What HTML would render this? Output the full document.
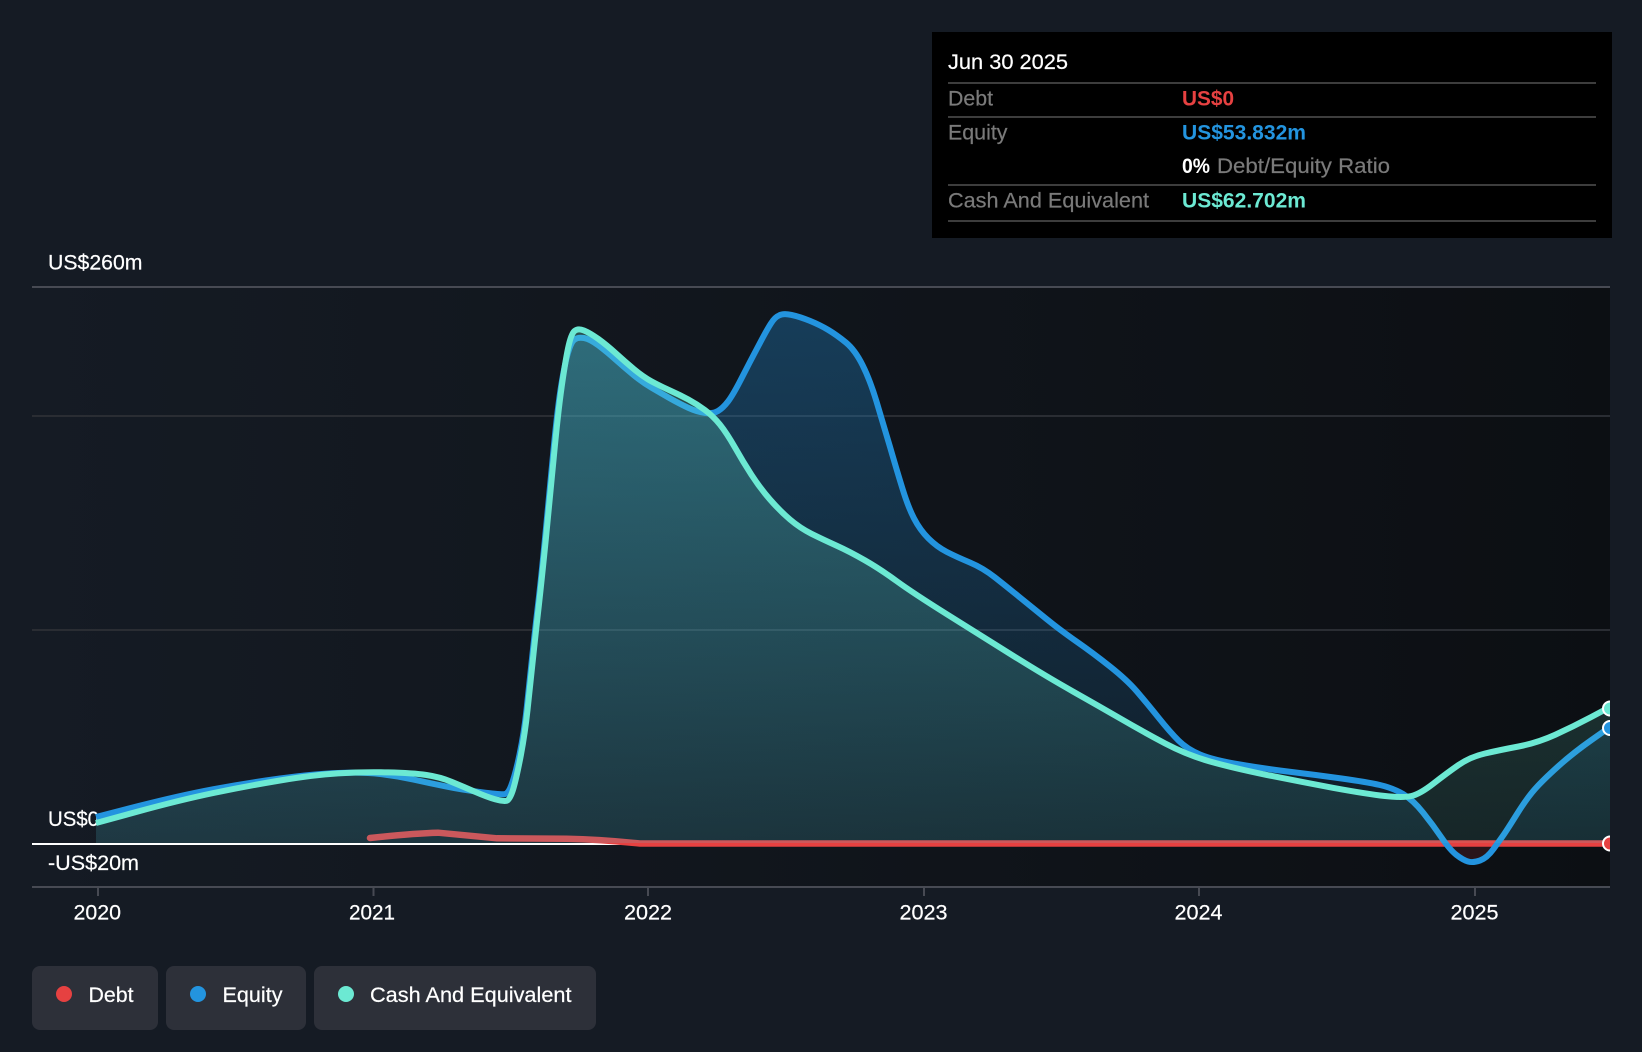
<!DOCTYPE html>
<html>
<head>
<meta charset="utf-8">
<style>
html,body{margin:0;padding:0;background:#151b24;width:1642px;height:1052px;overflow:hidden}
svg{display:block}
text{font-family:"Liberation Sans",sans-serif;font-size:21px;fill:#fff;stroke:#fff;stroke-width:.2px}
.g{fill:#7a7a7a;stroke:#7a7a7a}
</style>
</head>
<body>
<svg width="1642" height="1052" viewBox="0 0 1642 1052" xmlns="http://www.w3.org/2000/svg">
<defs>
<linearGradient id="bg" gradientUnits="userSpaceOnUse" x1="32" y1="0" x2="1610" y2="0">
<stop offset="0" stop-color="#151b24"/><stop offset="1" stop-color="#0c0f13"/>
</linearGradient>
<linearGradient id="blueF" gradientUnits="userSpaceOnUse" x1="0" y1="300" x2="0" y2="843">
<stop offset="0" stop-color="#2394df" stop-opacity=".32"/><stop offset="1" stop-color="#2394df" stop-opacity=".08"/>
</linearGradient>
<linearGradient id="tealF" gradientUnits="userSpaceOnUse" x1="0" y1="315" x2="0" y2="843">
<stop offset="0" stop-color="#6ce9d3" stop-opacity=".28"/><stop offset="1" stop-color="#6ce9d3" stop-opacity=".1"/>
</linearGradient>
<clipPath id="plot"><rect x="32" y="280" width="1578" height="610"/></clipPath>
</defs>
<rect width="1642" height="1052" fill="#151b24"/>
<rect x="32" y="287" width="1578" height="600" fill="url(#bg)"/>

<!-- grid -->
<rect x="32" y="286" width="1578" height="2" fill="#474a53"/>
<rect x="32" y="415" width="1578" height="2" fill="#2a2d33"/>
<rect x="32" y="629" width="1578" height="2" fill="#2a2d33"/>
<rect x="32" y="886" width="1578" height="2" fill="#474a53"/>
<g fill="#474a53">
<rect x="97" y="887" width="2" height="9"/><rect x="372.500" y="887" width="2" height="9"/><rect x="647" y="887" width="2" height="9"/><rect x="923" y="887" width="2" height="9"/><rect x="1198" y="887" width="2" height="9"/><rect x="1474" y="887" width="2" height="9"/>
</g>
<!-- axis labels -->
<text x="48" y="269.500" textLength="94.500" lengthAdjust="spacingAndGlyphs">US$260m</text>
<text x="48" y="826" textLength="51" lengthAdjust="spacingAndGlyphs">US$0</text>
<text x="48" y="870" textLength="91" lengthAdjust="spacingAndGlyphs">-US$20m</text>
<text x="73.500" y="919.500" textLength="47.500" lengthAdjust="spacingAndGlyphs">2020</text>
<text x="349" y="919.500" textLength="46" lengthAdjust="spacingAndGlyphs">2021</text>
<text x="624" y="919.500" textLength="48" lengthAdjust="spacingAndGlyphs">2022</text>
<text x="899.500" y="919.500" textLength="48" lengthAdjust="spacingAndGlyphs">2023</text>
<text x="1174.500" y="919.500" textLength="48" lengthAdjust="spacingAndGlyphs">2024</text>
<text x="1450.500" y="919.500" textLength="48" lengthAdjust="spacingAndGlyphs">2025</text>

<!-- baseline -->
<rect x="32" y="843" width="1578" height="2" fill="#fff"/>

<g clip-path="url(#plot)">
<!-- debt -->
<path d="M370 838 Q413 833.3 438 832.700 Q463 835 497 838.300 L566.700 838.700 Q600 839.300 640 843.500 L1610 843.500" fill="none" stroke="#e64141" stroke-width="6.500" stroke-linecap="round" stroke-linejoin="round"/>
<path d="M1445 843.500 Q1450 850 1456.500 855 Q1463 860 1468 861.500 Q1473 863 1480 860.500 Q1487 858 1493.500 849 L1497 843.500 Z" fill="#e64141" fill-opacity=".13"/>

<!-- equity fill -->
<path fill="url(#blueF)" d="M96 843 L96 817 L138 806.200 Q180 795.500 213.500 789.200 Q247 783 280 778.500 Q313 774 338 773 Q363 772 380 774 Q397 776 413.500 779.600 Q430 783.300 446.500 786.600 Q463 790 481.500 792.200 Q500 794.500 504 794.200 Q508 794 511 786 Q515 776 519.500 754.500 Q524 733 526.500 710 Q529 687 532 658.500 Q535 630 538 605 Q541 580 545 538.500 Q549 497 553 455 Q557 413 560.500 390 Q564 367 567.500 354.500 Q571 342 574.500 339.500 Q578 337 584 338 Q590 339 598.400 345.400 Q606.700 351.700 615.900 359.900 Q625 368 634 375.400 Q643 382.700 651.500 387.700 Q660 392.700 670 398.400 Q680 404 688.400 407.900 Q696.700 411.700 704.900 412.900 Q713 414 718 411 Q723 408 728 401.500 Q733 395 741.500 378.400 Q750 361.700 758.400 345.900 Q766.700 330 770.900 323.500 Q775 317 779 315.500 Q783 313 791.500 314.900 Q800 316.700 810 320.900 Q820 325 828.400 330 Q836.700 335 845.900 342.500 Q855 350 862.500 365 Q870 380 876.500 401.500 Q883 423 889.900 446.500 Q896.700 470 902.400 488.400 Q908 506.700 914 518.400 Q920 530 928.400 538.400 Q936.700 546.700 946.700 551.900 Q956.700 557 969.900 562.500 Q983 568 994.900 577.400 Q1006.700 586.700 1019.900 597.400 Q1033 608 1046.500 619 Q1060 630 1076.500 641.500 Q1093 653 1110 666.500 Q1127 680 1136.900 691.500 Q1146.700 703 1158.400 717.500 Q1170 732 1178.500 740.500 Q1187 749 1200 754.500 Q1213 760 1239.900 764.500 Q1266.700 769 1291.700 772 Q1316.700 775 1341.700 778.500 Q1366.700 782 1379.900 785 Q1393 788 1403 794 Q1413 800 1423 812.500 Q1429 820 1443 843 L1497 843 Q1500 840 1503.500 835 Q1507 830 1517 814 Q1527 798 1535 789 Q1543 780 1558 766.500 Q1573 753 1591.500 740 L1610 727 L1610 843 Z"/>
<!-- equity line -->
<path fill="none" stroke="#2394df" stroke-width="6" stroke-linejoin="round" d="M96 817 L138 806.200 Q180 795.500 213.500 789.200 Q247 783 280 778.500 Q313 774 338 773 Q363 772 380 774 Q397 776 413.500 779.600 Q430 783.300 446.500 786.600 Q463 790 481.500 792.200 Q500 794.500 504 794.200 Q508 794 511 786 Q515 776 519.500 754.500 Q524 733 526.500 710 Q529 687 532 658.500 Q535 630 538 605 Q541 580 545 538.500 Q549 497 553 455 Q557 413 560.500 390 Q564 367 567.500 354.500 Q571 342 574.500 339.500 Q578 337 584 338 Q590 339 598.400 345.400 Q606.700 351.700 615.900 359.900 Q625 368 634 375.400 Q643 382.700 651.500 387.700 Q660 392.700 670 398.400 Q680 404 688.400 407.900 Q696.700 411.700 704.900 412.900 Q713 414 718 411 Q723 408 728 401.500 Q733 395 741.500 378.400 Q750 361.700 758.400 345.900 Q766.700 330 770.900 323.500 Q775 317 779 315.500 Q783 313 791.500 314.900 Q800 316.700 810 320.900 Q820 325 828.400 330 Q836.700 335 845.900 342.500 Q855 350 862.500 365 Q870 380 876.500 401.500 Q883 423 889.900 446.500 Q896.700 470 902.400 488.400 Q908 506.700 914 518.400 Q920 530 928.400 538.400 Q936.700 546.700 946.700 551.900 Q956.700 557 969.900 562.500 Q983 568 994.900 577.400 Q1006.700 586.700 1019.900 597.400 Q1033 608 1046.500 619 Q1060 630 1076.500 641.500 Q1093 653 1110 666.500 Q1127 680 1136.900 691.500 Q1146.700 703 1158.400 717.500 Q1170 732 1178.500 740.500 Q1187 749 1200 754.500 Q1213 760 1239.900 764.500 Q1266.700 769 1291.700 772 Q1316.700 775 1341.700 778.500 Q1366.700 782 1379.900 785 Q1393 788 1403 794 Q1413 800 1423 812.500 Q1433 825 1441.500 837.500 Q1450 850 1456.500 855 Q1463 860 1468 861.500 Q1473 863 1480 860.500 Q1487 858 1493.500 849 Q1500 840 1503.500 835 Q1507 830 1517 814 Q1527 798 1535 789 Q1543 780 1558 766.500 Q1573 753 1591.500 740 L1610 727"/>
<!-- cash fill -->
<path fill="url(#tealF)" d="M96 843 L96 823 L138 811.500 Q180 800 213.500 793 Q247 786 280 780.500 Q313 775 338 773.400 Q363 771.700 388 772.400 Q413 773 426.500 775 Q440 777 451.500 781.800 Q463 786.500 475 791.800 Q487 797 495 799.300 Q503 801.500 506.500 800.800 Q510 800 513.400 788.500 Q516.700 777 520.900 755 Q525 733 527.500 710 Q530 687 533 658.500 Q536 630 538.900 605 Q541.700 580 545.900 538.500 Q550 497 554 455 Q558 413 561.500 388 Q565 363 568 348.500 Q571 334 574.500 331 Q578 328 584 330.500 Q590 333 598.400 339 Q606.700 345 615.900 353.400 Q625 361.700 634 369.200 Q643 376.700 651.500 381.400 Q660 386 670 390.500 Q680 395 688.400 399.500 Q696.700 404 704.900 410 Q713 416 719.900 424.500 Q726.700 433 734.900 447.400 Q743 461.700 751.500 474.900 Q760 488 770 499.500 Q780 511 790 519.500 Q800 528 811.500 533.800 Q823 539.500 836.500 545.600 Q850 551.700 865 560.400 Q880 569 896.500 581 Q913 593 946.500 614 Q980 635 1013.400 655.900 Q1046.700 676.700 1073.400 691.700 Q1100 706.700 1121.500 719.200 Q1143 731.700 1165 743.400 Q1187 755 1210 761.500 Q1233 768 1266.500 774.900 Q1300 781.700 1333.500 787.900 Q1367 794 1385 796 Q1403 798 1411.500 796 Q1420 794 1433.500 783.500 Q1447 773 1458.500 765 Q1470 757 1485 753.500 Q1500 750 1518.500 746.500 Q1537 743 1555 734.900 Q1573 726.700 1591.500 716.900 L1610 707 L1610 843 Z"/>
<!-- cash line -->
<path fill="none" stroke="#6ce9d3" stroke-width="6" stroke-linejoin="round" d="M96 823 L138 811.500 Q180 800 213.500 793 Q247 786 280 780.500 Q313 775 338 773.400 Q363 771.700 388 772.400 Q413 773 426.500 775 Q440 777 451.500 781.800 Q463 786.500 475 791.800 Q487 797 495 799.300 Q503 801.500 506.500 800.800 Q510 800 513.400 788.500 Q516.700 777 520.900 755 Q525 733 527.500 710 Q530 687 533 658.500 Q536 630 538.900 605 Q541.700 580 545.900 538.500 Q550 497 554 455 Q558 413 561.500 388 Q565 363 568 348.500 Q571 334 574.500 331 Q578 328 584 330.500 Q590 333 598.400 339 Q606.700 345 615.900 353.400 Q625 361.700 634 369.200 Q643 376.700 651.500 381.400 Q660 386 670 390.500 Q680 395 688.400 399.500 Q696.700 404 704.900 410 Q713 416 719.900 424.500 Q726.700 433 734.900 447.400 Q743 461.700 751.500 474.900 Q760 488 770 499.500 Q780 511 790 519.500 Q800 528 811.500 533.800 Q823 539.500 836.500 545.600 Q850 551.700 865 560.400 Q880 569 896.500 581 Q913 593 946.500 614 Q980 635 1013.400 655.900 Q1046.700 676.700 1073.400 691.700 Q1100 706.700 1121.500 719.200 Q1143 731.700 1165 743.400 Q1187 755 1210 761.500 Q1233 768 1266.500 774.900 Q1300 781.700 1333.500 787.900 Q1367 794 1385 796 Q1403 798 1411.500 796 Q1420 794 1433.500 783.500 Q1447 773 1458.500 765 Q1470 757 1485 753.500 Q1500 750 1518.500 746.500 Q1537 743 1555 734.900 Q1573 726.700 1591.500 716.900 L1610 707"/>
<!-- end dots -->
<circle cx="1610" cy="843.500" r="7" fill="#e64141" stroke="#fff" stroke-width="2"/>
<circle cx="1610" cy="728" r="7" fill="#2394df" stroke="#fff" stroke-width="2"/>
<circle cx="1610" cy="708.500" r="7" fill="#6ce9d3" stroke="#fff" stroke-width="2"/>
</g>

<!-- tooltip panel -->
<rect x="932" y="32" width="680" height="206" fill="#000"/>
<g fill="#3d3d3d">
<rect x="948" y="82" width="648" height="2"/>
<rect x="948" y="116" width="648" height="2"/>
<rect x="948" y="184" width="648" height="2"/>
<rect x="948" y="220" width="648" height="2"/>
</g>
<text x="948" y="69" textLength="120" lengthAdjust="spacingAndGlyphs">Jun 30 2025</text>
<text class="g" x="948" y="105.500" textLength="45" lengthAdjust="spacingAndGlyphs">Debt</text>
<text x="1182" y="105.500" textLength="52" lengthAdjust="spacingAndGlyphs" style="fill:#e64141;stroke:none;font-weight:700">US$0</text>
<text class="g" x="948" y="139.500" textLength="59.500" lengthAdjust="spacingAndGlyphs">Equity</text>
<text x="1182" y="139.500" textLength="124" lengthAdjust="spacingAndGlyphs" style="fill:#2394df;stroke:none;font-weight:700">US$53.832m</text>
<text x="1182" y="173" textLength="28" lengthAdjust="spacingAndGlyphs" style="stroke:none;font-weight:700">0%</text>
<text class="g" x="1217" y="173" textLength="173" lengthAdjust="spacingAndGlyphs">Debt/Equity Ratio</text>
<text class="g" x="948" y="207.500" textLength="201" lengthAdjust="spacingAndGlyphs">Cash And Equivalent</text>
<text x="1182" y="207.500" textLength="124" lengthAdjust="spacingAndGlyphs" style="fill:#6ce9d3;stroke:none;font-weight:700">US$62.702m</text>

<!-- legend -->
<rect x="32" y="966" width="126" height="64" rx="8" fill="#2d3039"/>
<rect x="166" y="966" width="140" height="64" rx="8" fill="#2d3039"/>
<rect x="314" y="966" width="282" height="64" rx="8" fill="#2d3039"/>
<circle cx="64" cy="994" r="8" fill="#e64141"/>
<circle cx="198" cy="994" r="8" fill="#2394df"/>
<circle cx="346" cy="994" r="8" fill="#6ce9d3"/>
<text x="88.500" y="1002" textLength="45" lengthAdjust="spacingAndGlyphs">Debt</text>
<text x="222.500" y="1002" textLength="60" lengthAdjust="spacingAndGlyphs">Equity</text>
<text x="370" y="1002" textLength="201.500" lengthAdjust="spacingAndGlyphs">Cash And Equivalent</text>
</svg>
</body>
</html>
